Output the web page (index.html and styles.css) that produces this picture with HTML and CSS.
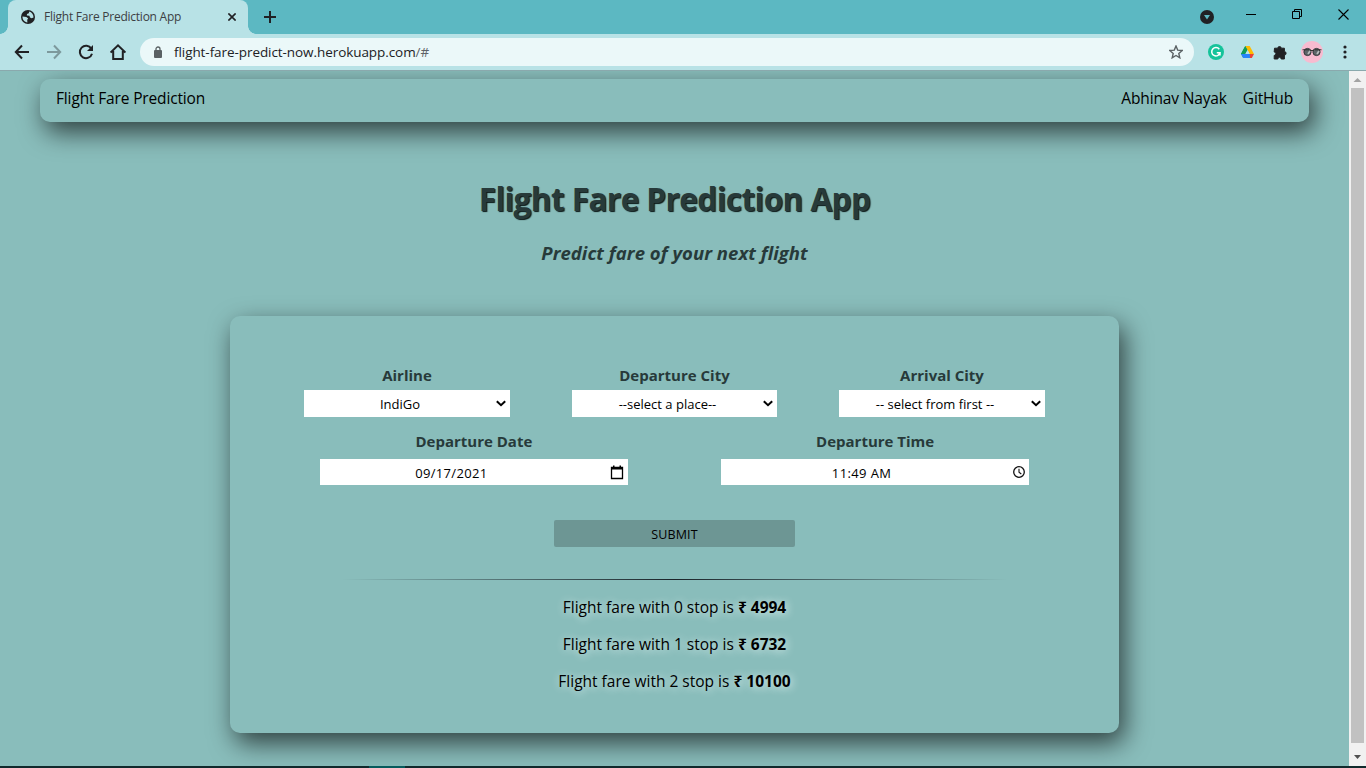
FILE: index.html
```html
<!DOCTYPE html>
<html lang="en">
<head>
<meta charset="utf-8">
<title>Flight Fare Prediction App</title>
<link rel="stylesheet" href="styles.css">
</head>
<body>
<div class="tabstrip">
  <div class="tab">
    <svg class="globe" width="14" height="14" viewBox="0 0 14 14"><circle cx="7" cy="7" r="7" fill="#202124"/><path d="M8.2 1.5 7.8 3.2 6 4 5.8 5.6 8.4 5.8 9 7.6 10.6 8.2 12.5 7.4C12.7 4.6 10.8 2.2 8.2 1.5M1.5 6.6 5.4 7 7.2 8.6 6.2 9.8 6.4 12.5C3.5 12.3 1.3 9.6 1.5 6.6" fill="#b8e2e6"/></svg>
    <span class="tab-title">Flight Fare Prediction App</span>
    <svg class="tab-close" width="8" height="8" viewBox="0 0 8 8"><path d="M.4.4 7.6 7.6M7.6.4.4 7.6" stroke="#202124" stroke-width="1.6"/></svg>
  </div>
  <svg class="plus" width="12" height="12" viewBox="0 0 12 12"><path d="M6 0V12M0 6H12" stroke="#202124" stroke-width="2"/></svg>
  <div class="window-buttons">
    <svg width="14" height="14" viewBox="0 0 14 14"><circle cx="7" cy="7" r="7" fill="#202124"/><path d="M4 5H10L7 9.6Z" fill="#5cb8c2"/></svg>
    <svg width="10" height="10" viewBox="0 0 10 10"><path d="M0 5.5H10" stroke="#000"/></svg>
    <svg width="10" height="10" viewBox="0 0 10 10"><path d="M.5 2.5H7.5V9.5H.5ZM2.5 2.5V.5H9.5V7.5H7.5" fill="none" stroke="#000"/></svg>
    <svg width="11" height="11" viewBox="0 0 11 11"><path d="M.5.5 10.5 10.5M10.5.5.5 10.5" stroke="#000" stroke-width="1.1"/></svg>
  </div>
</div>
<div class="toolbar">
  <div class="nav-icons">
    <svg width="16" height="16" viewBox="0 0 16 16" fill="none" stroke="#202124" stroke-width="2"><path d="M15 8H2M8 1.5 1.8 8 8 14.5"/></svg>
    <svg width="16" height="16" viewBox="0 0 16 16" fill="none" stroke="#7d999c" stroke-width="2"><path d="M1 8H14M8 1.5 14.2 8 8 14.5"/></svg>
    <svg width="16" height="16" viewBox="0 0 16 16"><path d="M13.3 4.6A6.2 6.2 0 1 0 14 9.7" fill="none" stroke="#202124" stroke-width="2"/><path d="M15 1V7H9Z" fill="#202124"/></svg>
    <svg width="16" height="16" viewBox="0 0 16 16" fill="none" stroke="#202124" stroke-width="2"><path d="M.6 8.6 8 1.4 15.4 8.6M3.2 7V15H12.8V7"/></svg>
  </div>
  <div class="omnibox">
    <svg width="8" height="12" viewBox="0 0 8 12"><rect y="4" width="8" height="8" rx="1" fill="#5a6164"/><path d="M2 5V3A2 2 0 0 1 6 3V5" fill="none" stroke="#5a6164" stroke-width="1.3"/></svg>
    <span class="url">flight-fare-predict-now.herokuapp.com<span class="hash">/#</span></span>
    <svg class="star" width="14" height="14" viewBox="0 0 14 14"><path d="M7 1 8.7 5.1 13.2 5.5 9.8 8.4 10.8 12.8 7 10.5 3.2 12.8 4.2 8.4.8 5.5 5.3 5.1Z" fill="none" stroke="#5a6164" stroke-width="1.4"/></svg>
  </div>
  <div class="extensions">
    <svg width="16" height="16" viewBox="0 0 16 16"><circle cx="8" cy="8" r="8" fill="#15c39a"/><path d="M11.3 5.2A4.2 4.2 0 1 0 12 8.8H8.8M12 8.8V11.6" fill="none" stroke="#fff" stroke-width="1.5"/></svg>
    <svg width="13" height="12" viewBox="0 0 13 12"><path d="M4.3 0 0 7.8 2.2 12 6.5 4Z" fill="#0f9d58"/><path d="M4.3 0H8.7L13 8H8.7Z" fill="#ffba00"/><path d="M0 8H9.2L9.8 12H2.2Z" fill="#2684fc"/><path d="M0 8 4.3 0 6.5 4 4.3 8Z" fill="#0f9d58"/><path d="M8.8 8H13L10.8 12H9Z" fill="#ea4335"/><path d="M6.5 4 8.7 8H4.3Z" fill="#b8e2e6"/></svg>
    <svg width="15" height="15" viewBox="0 0 15 15"><path d="M1.5 3.2H4.8A1.7 1.7 0 1 1 8.2 3.2H11.4V6.6A1.7 1.7 0 1 1 11.4 10V14H8.2A1.7 1.7 0 0 0 4.8 14H1.2V10.4A1.7 1.7 0 0 0 1.2 7Z" fill="#202124" stroke="#202124" stroke-linejoin="round"/></svg>
    <svg width="22" height="22" viewBox="0 0 22 22"><circle cx="11" cy="11" r="11" fill="#f8bbd0"/><circle cx="6.5" cy="11" r="3.6" fill="#5d6568" stroke="#33383a"/><circle cx="15.5" cy="11" r="3.6" fill="#5d6568" stroke="#33383a"/><path d="M1.5 8.8H8M14 8.8H20.5M9 9.5H13" stroke="#333"/><path d="M7 13 9 10M16 13 18 10" stroke="#b6bcbd" stroke-width="1.7"/></svg>
    <svg width="4" height="14" viewBox="0 0 4 14" fill="#202124"><circle cx="2" cy="2" r="1.6"/><circle cx="2" cy="7" r="1.6"/><circle cx="2" cy="12" r="1.6"/></svg>
  </div>
</div>
<div class="viewport">
  <main class="page">
    <nav class="navbar">
      <a class="brand">Flight Fare Prediction</a>
      <a class="author">Abhinav Nayak</a>
      <a class="github">GitHub</a>
    </nav>
    <h1>Flight Fare Prediction App</h1>
    <h2>Predict fare of your next flight</h2>
    <section class="card">
      <div class="row row-three">
        <div class="field"><label>Airline</label><div class="select"><span>IndiGo</span><svg width="10" height="7" viewBox="0 0 10 7"><path d="M.8 1.2 5 5.2 9.2 1.2" fill="none" stroke="#000" stroke-width="2"/></svg></div></div>
        <div class="field"><label>Departure City</label><div class="select"><span>--select a place--</span><svg width="10" height="7" viewBox="0 0 10 7"><path d="M.8 1.2 5 5.2 9.2 1.2" fill="none" stroke="#000" stroke-width="2"/></svg></div></div>
        <div class="field"><label>Arrival City</label><div class="select"><span>-- select from first --</span><svg width="10" height="7" viewBox="0 0 10 7"><path d="M.8 1.2 5 5.2 9.2 1.2" fill="none" stroke="#000" stroke-width="2"/></svg></div></div>
      </div>
      <div class="row row-two">
        <div class="field"><label>Departure Date</label><div class="picker date"><span>09/17/2021</span><svg width="14" height="15" viewBox="0 0 14 15"><path d="M1.5 2.5H12.5V13.5H1.5Z" fill="none" stroke="#000" stroke-width="1.3"/><path d="M1 2H13V4.5H1ZM3 .5H4.5V3H3ZM9.5.5H11V3H9.5Z"/></svg></div></div>
        <div class="field"><label>Departure Time</label><div class="picker time"><span>11:49 AM</span><svg width="12" height="12" viewBox="0 0 12 12" fill="none" stroke="#111"><circle cx="6" cy="6" r="5.3" stroke-width="1.3"/><path d="M6 2.8V6.2L8.3 8" stroke-width="1.1"/></svg></div></div>
      </div>
      <div class="submit"><span>SUBMIT</span></div>
      <div class="rule"></div>
      <p>Flight fare with 0 stop is <b>₹ 4994</b></p>
      <p>Flight fare with 1 stop is <b>₹ 6732</b></p>
      <p>Flight fare with 2 stop is <b>₹ 10100</b></p>
    </section>
  </main>
  <div class="scrollbar">
    <svg width="17" height="17" viewBox="0 0 17 17"><path d="M4.5 11H12.5L8.5 7Z" fill="#a3a3a3"/></svg>
    <div class="thumb"></div>
    <svg width="17" height="23" viewBox="0 0 17 23"><path d="M5 12H12L8.5 16Z" fill="#505050"/></svg>
  </div>
</div>
<div class="taskbar"><i></i></div>
</body>
</html>
```
FILE: styles.css
```css
* { box-sizing: border-box; }
body { margin: 0; width: 1366px; height: 768px; overflow: hidden; display: flex; flex-direction: column; font: 16px/24px "Open Sans", "Noto Sans", sans-serif; background: #89bdbb; color: #000; }
svg { display: block; flex: none; }
span, a, label { white-space: nowrap; }
.tabstrip { height: 34px; background: #5cb8c2; display: flex; padding-left: 8px; }
.tab { width: 240px; height: 34px; background: #b8e2e6; border-radius: 8px 8px 0 0; display: flex; align-items: center; padding-left: 13px; font-size: 12px; color: #3c4043; position: relative; }
.tab::before, .tab::after { content: ""; position: absolute; bottom: 0; width: 8px; height: 8px; }
.tab::before { left: -8px; background: radial-gradient(circle at 0 0, transparent 7.5px, #b8e2e6 8px); }
.tab::after { right: -8px; background: radial-gradient(circle at 100% 0, transparent 7.5px, #b8e2e6 8px); }
.tab-title { width: 176px; margin-left: 9px; letter-spacing: -.24px; }
.tab-close { margin-left: 8px; }
.plus { margin: 11px 0 0 16px; }
.window-buttons { margin-left: auto; display: flex; align-items: center; height: 28px; padding-right: 17px; }
.window-buttons svg + svg { margin-left: 36px; }
.window-buttons svg:nth-child(2) { margin-left: 32px; }
.window-buttons svg:first-child { margin-top: 5px; }
.toolbar { height: 37px; background: #b8e2e6; border-bottom: 1px solid #8aa9ad; display: flex; align-items: center; }
.nav-icons { display: flex; gap: 16px; padding-left: 14px; }
.omnibox { width: 1054px; height: 28px; margin-left: 14px; border-radius: 14px; background: #ebf8f9; display: flex; align-items: center; padding-left: 14px; font-size: 13.5px; color: #202124; }
.url { margin-left: 12px; letter-spacing: -.07px; }
.hash { color: #5f6368; }
.star { margin-left: auto; margin-right: 11px; }
.extensions { display: flex; align-items: center; padding-left: 14px; }
.extensions svg:nth-child(2) { margin-left: 17px; }
.extensions svg:nth-child(3) { margin-left: 19px; }
.extensions svg:nth-child(4) { margin-left: 13px; }
.extensions svg:nth-child(5) { margin-left: 20px; }
.viewport { height: 695px; display: flex; }
.page { width: 1349px; height: 695px; overflow: hidden; display: flex; flex-direction: column; align-items: center; }
.navbar, .card { border-radius: 10px; background: #89bdbb; box-shadow: 5px 10px 26px rgba(0,0,0,.66); }
.navbar { width: 1269px; height: 43px; flex: none; margin-top: 8px; display: flex; padding: 7px 16px; font-size: 15.5px; letter-spacing: -.15px; }
.brand { margin-right: auto; }
.github { margin-left: 16px; }
h1 { margin: 53px 0 0; font-size: 31.5px; line-height: 48px; color: #273a3a; text-shadow: 1px 1px 1px #0c1818; font-weight: 700; letter-spacing: -.55px; }
h2 { margin: 18px 0 0; font-size: 18.5px; line-height: 24px; color: #273a3a; font-style: italic; letter-spacing: .04px; }
.card { width: 889px; height: 417px; flex: none; margin-top: 51px; padding: 47px 43px 0; display: flex; flex-direction: column; align-items: center; }
.row { width: 802.5px; display: grid; }
.row-three { grid-template-columns: repeat(3, 1fr); }
.row-two { grid-template-columns: repeat(2, 1fr); margin-top: 12px; }
.field { display: flex; flex-direction: column; align-items: center; }
label { font-weight: 700; font-size: 15px; color: #273a3a; line-height: 24px; height: 27px; }
.row-two label { height: 30px; }
.select, .picker { background: #fff; position: relative; display: flex; justify-content: center; font-size: 13px; }
.select { width: 205.5px; height: 27px; line-height: 29px; padding-right: 14px; }
.select svg { position: absolute; right: 4px; top: 10px; }
.picker { width: 308px; height: 26px; line-height: 28px; padding-right: 45px; }
.picker svg { position: absolute; right: 4px; top: 6px; }
.picker.time svg { top: 7px; }
.date span { letter-spacing: .35px; }
.time { padding-right: 27px; }
.time span { letter-spacing: .4px; }
.submit { width: 241px; height: 27px; margin-top: 35px; border-radius: 2px; background: #6d9694; text-align: center; font-size: 12.5px; line-height: 29px; letter-spacing: .1px; }
.rule { width: 665px; height: 1px; margin: 32px 0 15px; background: linear-gradient(90deg, transparent, #1b2329, transparent); }
p { margin: 0 0 13px; font-size: 15.5px; line-height: 24px; text-shadow: 1px 1px 8px #e8f6f5; }
.scrollbar { width: 17px; height: 695px; background: #f1f1f1; }
.thumb { width: 13px; height: 655px; margin-left: 2px; background: #c1c1c1; }
.taskbar { height: 2px; background: #102a2c; }
.taskbar i { display: block; width: 36px; height: 2px; margin-left: 369px; background: #075a5c; }
```
